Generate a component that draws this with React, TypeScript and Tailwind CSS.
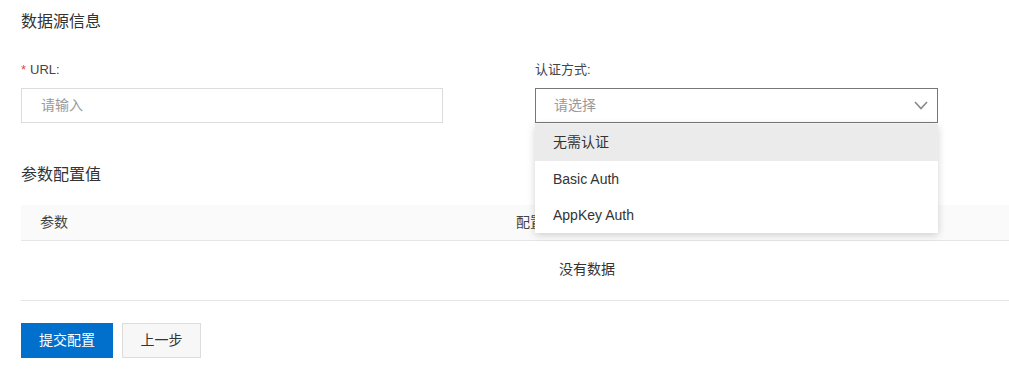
import React from "react";

const font = { fontFamily: '"Liberation Sans", "Noto Sans CJK SC", Arial, sans-serif' };

export default function App() {
  return (
    <div className="w-[1009px] h-[374px] overflow-hidden bg-white text-[#333]" style={font}>
      <div className="pl-[21px] pt-[10px]">
        <div className="text-[16px] leading-[24px] text-[#333]">数据源信息</div>

        <div className="flex mt-[26px]">
          <div className="w-[514px]">
            <div className="text-[13px] leading-[20px] flex items-center text-[#444]">
              <span className="text-[#e5484d] mr-[4px]">*</span>
              <span>URL:</span>
            </div>
            <div className="mt-[8px] w-[422px] h-[35px] border border-[#dcdcdc] flex items-center pl-[19px] text-[14px] text-[#999]">
              请输入
            </div>
          </div>
          <div className="w-[403px] relative">
            <div className="text-[13px] leading-[20px] text-[#444]">认证方式:</div>
            <div className="mt-[8px] w-[403px] h-[35px] border border-[#777] flex items-center justify-between pl-[18px] pr-[9px] text-[14px] text-[#999]">
              <span>请选择</span>
              <svg width="14" height="9" viewBox="0 0 14 9">
                <polyline points="1,1 7,7.5 13,1" fill="none" stroke="#888" strokeWidth="1.6" />
              </svg>
            </div>
            <div className="absolute left-0 top-[64px] w-[403px] bg-white shadow-[0_2px_8px_rgba(0,0,0,0.18)] z-10 text-[14px] text-[#333]">
              <div className="h-[37px] flex items-center pl-[18px] bg-[#ebebeb]">无需认证</div>
              <div className="h-[36px] flex items-center pl-[18px]">Basic Auth</div>
              <div className="h-[36px] flex items-center pl-[18px]">AppKey Auth</div>
            </div>
          </div>
        </div>

        <div className="mt-[40px] text-[16px] leading-[24px] text-[#333]">参数配置值</div>

        <div className="mt-[18px] w-[1132px] text-[14px]">
          <div className="flex h-[36px] bg-[#fafafa] border-b border-[#e6e6e6] items-center text-[#444]">
            <div className="w-[476px] pl-[19px]">参数</div>
            <div className="pl-[19px]">配置值</div>
          </div>
          <div className="h-[60px] border-b border-[#e6e6e6] flex items-center justify-center pb-[2px]">
            没有数据
          </div>
        </div>

        <div className="mt-[22px] flex gap-[9px]">
          <button className="w-[92px] h-[35px] bg-[#0070cc] text-white text-[14px]">提交配置</button>
          <button className="w-[79px] h-[35px] bg-[#f7f7f7] border border-[#dcdcdc] text-[#333] text-[14px]">上一步</button>
        </div>
      </div>
    </div>
  );
}
